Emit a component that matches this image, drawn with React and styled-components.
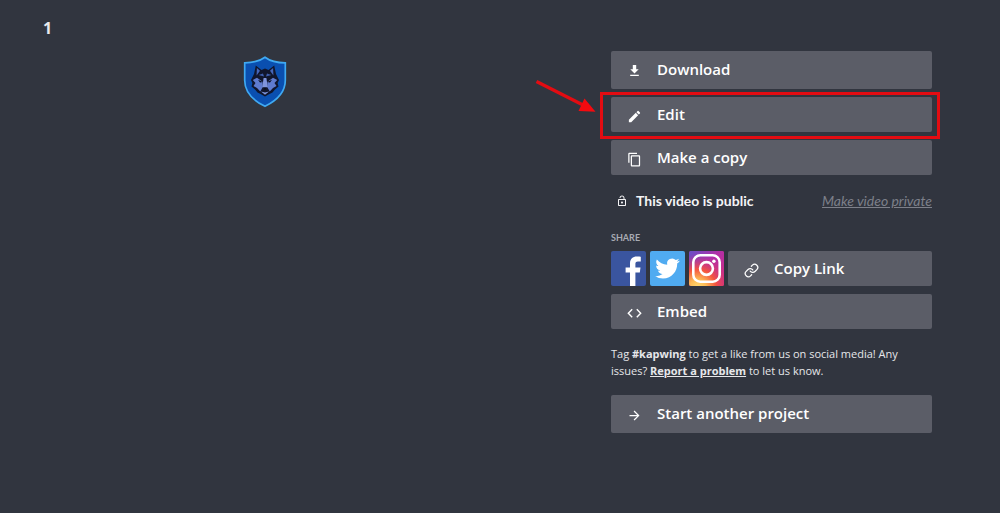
import React from "react";
import styled, { createGlobalStyle } from "styled-components";
import {
  MdEdit,
  MdContentCopy,
  MdLockOpen,
  MdArrowForward,
} from "react-icons/md";

const GlobalStyle = createGlobalStyle`
  *, *::before, *::after { box-sizing: border-box; }
  body {
    margin: 0;
    background: #31353f;
    color: #fff;
    font-family: "Open Sans", "Noto Sans", sans-serif;
  }
`;

const Page = styled.main`
  display: grid;
  grid-template-columns: minmax(0, 1fr) minmax(0, 321px);
  column-gap: 124px;
  min-height: 100vh;
  padding: 16px 68px 16px 43px;
`;

const Preview = styled.section`
  display: flex;
  flex-direction: column;
`;

const Title = styled.h1`
  margin: 0;
  font-size: 16px;
  line-height: 24px;
  font-weight: 700;
  color: #e8e9ec;
`;

const Media = styled.div`
  display: flex;
  justify-content: center;
  padding-top: 16px;
`;

const Panel = styled.aside`
  display: flex;
  flex-direction: column;
  gap: 8px;
  padding-top: 35px;
`;

const ActionButton = styled.button`
  display: flex;
  align-items: center;
  flex: 1 0 auto;
  gap: 15px;
  width: ${(p) => (p.$fill ? "auto" : "100%")};
  height: ${(p) => (p.$tall ? 38 : 35)}px;
  padding: 0 16px 2px;
  border: 0;
  border-radius: 2px;
  background: #5b5d67;
  color: #fff;
  font: 600 15px/24px "Open Sans", "Noto Sans", sans-serif;
  text-align: left;
  cursor: pointer;

  svg {
    flex: none;
    width: 15px;
    height: 15px;
    margin-top: 5px;
  }
`;

const Actions = styled.div`
  display: flex;
  flex-direction: column;
  gap: 8px;
`;

const Highlighted = styled.div`
  position: relative;
  display: flex;
`;

const HighlightFrame = styled.div`
  position: absolute;
  inset: -5px -8px -7px -11px;
  border: 3px solid #e30c12;
  pointer-events: none;
`;

const HighlightArrow = styled.svg`
  position: absolute;
  right: 100%;
  top: -19px;
  width: 78px;
  height: 38px;
  pointer-events: none;
`;

const Privacy = styled.div`
  display: flex;
  justify-content: space-between;
  align-items: center;
  height: 24px;
  margin-top: 6px;
  font: 14px/24px Lato, "Open Sans", sans-serif;
`;

const PrivacyStatus = styled.span`
  display: flex;
  align-items: center;
  gap: 8px;
  padding-left: 5px;
  font-weight: 700;
  color: #f4f4f6;

  svg {
    width: 12px;
    height: 12px;
  }
`;

const PrivacyLink = styled.a`
  font-style: italic;
  color: #7d808a;
  text-decoration: underline;
`;

const ShareLabel = styled.h2`
  margin: 12px 0 0;
  font: 700 9px/10px Lato, "Open Sans", sans-serif;
  color: #a8abb3;
`;

const ShareRow = styled.div`
  display: flex;
  gap: 4px;
`;

const SocialButton = styled.button`
  flex: none;
  width: 35px;
  height: 35px;
  padding: 0;
  border: 0;
  border-radius: 2px;
  overflow: hidden;
  background: ${(p) => p.$color};
  cursor: pointer;

  svg {
    display: block;
    width: 100%;
    height: 100%;
  }
`;

const Note = styled.p`
  margin: 8px 0;
  font-size: 11px;
  line-height: 17px;
  color: #e6e7ea;

  a {
    color: inherit;
    font-weight: 700;
  }
`;

const DownloadIcon = () => (
  <svg viewBox="0 0 15 15" fill="currentColor" aria-hidden="true">
    <path d="M5.8 1h3.4v4.3h2.5L7.5 9.6 3.3 5.3h2.5zM3.2 10.8h8.6v1.3H3.2z" />
  </svg>
);

const CodeIcon = () => (
  <svg
    viewBox="0 0 15 15"
    fill="none"
    stroke="currentColor"
    strokeWidth="1.4"
    aria-hidden="true"
  >
    <path d="M5.2 3.2 1.3 7.2l3.9 4M9.8 3.2l3.9 4-3.9 4" />
  </svg>
);

const LinkIcon = () => (
  <svg
    viewBox="0 0 24 24"
    fill="none"
    stroke="currentColor"
    strokeWidth="2"
    strokeLinecap="round"
    aria-hidden="true"
  >
    <path d="M10 13a5 5 0 0 0 7.54.54l3-3a5 5 0 0 0-7.07-7.07l-1.72 1.71" />
    <path d="M14 11a5 5 0 0 0-7.54-.54l-3 3a5 5 0 0 0 7.07 7.07l1.710-1.710" />
  </svg>
);

const FacebookLogo = () => (
  <svg viewBox="0 0 35 35" aria-hidden="true">
    <path
      fill="#fff"
      d="M19 35V21.6h-4.4v-5.2H19v-3.9c0-4.5 2.8-6.9 6.8-6.9 1.9 0 3.5.1 4 .2v4.7H27c-2.2 0-2.6 1-2.6 2.6v3.3h5.1l-.7 5.2h-4.4V35z"
    />
  </svg>
);

const TwitterLogo = () => (
  <svg viewBox="0 0 35 35" aria-hidden="true">
    <path
      fill="#fff"
      transform="translate(5.2 5.2) scale(1.02)"
      d="M23.95 4.57a10 10 0 0 1-2.82.77 4.96 4.96 0 0 0 2.16-2.72 9.9 9.9 0 0 1-3.12 1.19 4.92 4.92 0 0 0-8.38 4.48C7.69 8.09 4.07 6.13 1.64 3.16a4.92 4.92 0 0 0 1.52 6.57 4.9 4.9 0 0 1-2.23-.61v.06a4.92 4.92 0 0 0 3.95 4.83 5 5 0 0 1-2.21.08 4.94 4.94 0 0 0 4.6 3.42A9.87 9.87 0 0 1 0 19.54a13.99 13.99 0 0 0 7.55 2.21c9.05 0 14-7.5 14-13.98 0-.21 0-.42-.02-.63a9.94 9.94 0 0 0 2.46-2.55z"
    />
  </svg>
);

const InstagramLogo = () => (
  <svg viewBox="0 0 35 35" aria-hidden="true">
    <defs>
      <linearGradient id="ig-base" x1="0" y1="0" x2="1" y2="1">
        <stop offset="0" stopColor="#6650c8" />
        <stop offset=".45" stopColor="#b32fa7" />
        <stop offset="1" stopColor="#d62e79" />
      </linearGradient>
      <radialGradient id="ig-glow" cx=".25" cy="1.05" r=".95">
        <stop offset="0" stopColor="#ffdc72" />
        <stop offset=".25" stopColor="#fdbb55" />
        <stop offset=".55" stopColor="#f4553f" />
        <stop offset="1" stopColor="#cf2f86" stopOpacity="0" />
      </radialGradient>
    </defs>
    <rect width="35" height="35" fill="url(#ig-base)" />
    <rect width="35" height="35" fill="url(#ig-glow)" />
    <g fill="none" stroke="#fff" strokeWidth="2.6">
      <rect x="4.3" y="4.3" width="26.4" height="26.4" rx="7" />
      <circle cx="17.5" cy="17.5" r="6.4" />
    </g>
    <circle cx="24.9" cy="10.2" r="1.7" fill="#fff" />
  </svg>
);

const WolfShield = () => (
  <svg width="44" height="52" viewBox="0 0 44 52" role="img" aria-label="Wolf shield">
    <path
      d="M22 1.2C17 5 9.6 6.8 1.7 6.8v17.5C1.7 37.5 11 45 22 50.3 33 45 42.3 37.5 42.3 24.3V6.8C34.4 6.8 27 5 22 1.2z"
      fill="#0a4fb0"
      stroke="#3fa9f2"
      strokeWidth="1.7"
    />
    <path
      d="M12.800 9.500 18.500 14 22 12.500 25.500 14 31.200 9.500 33 18 36 24 34.600 27 35.500 30.500 32 33.500 29.500 36.500 25.500 38.500 22 40.500 18.500 38.500 14.500 36.500 12 33.500 8.500 30.500 9.400 27 8 24 11 18z"
      fill="#10152c"
    />
    <path d="M13.900 12 17 14.800 13.600 19.500zM30.100 12 27 14.800 30.400 19.500z" fill="#4666b8" />
    <path
      d="M9.800 24 14 21.800 19.500 25.800 19.800 31 17.300 35.500 14 32 10.500 30 12.500 27zM34.200 24 30 21.800 24.500 25.800 24.200 31 26.700 35.500 30 32 33.500 30 31.500 27z"
      fill="#5f7bcf"
    />
    <path d="M20.600 22h2.800l1.300 9-2.700 2-2.700-2z" fill="#7f94dc" />
    <path d="M15.500 19 20 17.500 21 20.500zM28.500 19 24 17.500 23 20.500z" fill="#3d5cab" />
    <path d="M15 23.800 19.800 26 17 26.600zM29 23.800 24.200 26 27 26.600z" fill="#070b1b" />
    <path d="M19.800 31.200h4.400L22 34z" fill="#070b1b" />
    <path d="M18 35.500 22 36.500 26 35.500 22 38.700z" fill="#7d95dc" />
  </svg>
);

export default function App() {
  return (
    <>
      <GlobalStyle />
      <Page>
        <Preview>
          <Title>1</Title>
          <Media>
            <WolfShield />
          </Media>
        </Preview>

        <Panel>
          <Actions>
            <ActionButton type="button" $tall>
              <DownloadIcon />
              Download
            </ActionButton>
            <Highlighted>
              <ActionButton type="button">
                <MdEdit aria-hidden="true" />
                Edit
              </ActionButton>
              <HighlightFrame />
              <HighlightArrow viewBox="0 0 78 38" aria-hidden="true">
                <path d="M3.5 3.5 50 27" stroke="#e30c12" strokeWidth="3.4" />
                <path d="M51.5 20.5 62.5 33.7 45.5 33z" fill="#f50a0f" />
              </HighlightArrow>
            </Highlighted>
            <ActionButton type="button">
              <MdContentCopy aria-hidden="true" />
              Make a copy
            </ActionButton>
          </Actions>

          <Privacy>
            <PrivacyStatus>
              <MdLockOpen aria-hidden="true" />
              This video is public
            </PrivacyStatus>
            <PrivacyLink href="#private">Make video private</PrivacyLink>
          </Privacy>

          <ShareLabel>SHARE</ShareLabel>
          <ShareRow>
            <SocialButton type="button" $color="#3a559f" aria-label="Facebook">
              <FacebookLogo />
            </SocialButton>
            <SocialButton type="button" $color="#50abf1" aria-label="Twitter">
              <TwitterLogo />
            </SocialButton>
            <SocialButton type="button" $color="#c13584" aria-label="Instagram">
              <InstagramLogo />
            </SocialButton>
            <ActionButton type="button" $fill>
              <LinkIcon />
              Copy Link
            </ActionButton>
          </ShareRow>
          <Actions>
            <ActionButton type="button">
              <CodeIcon />
              Embed
            </ActionButton>
          </Actions>

          <Note>
            Tag <strong>#kapwing</strong> to get a like from us on social media! Any
            issues? <a href="#report">Report a problem</a> to let us know.
          </Note>

          <Actions>
            <ActionButton type="button" $tall>
              <MdArrowForward aria-hidden="true" />
              Start another project
            </ActionButton>
          </Actions>
        </Panel>
      </Page>
    </>
  );
}
